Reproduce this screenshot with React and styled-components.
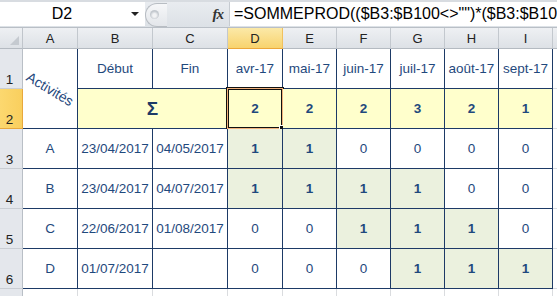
import React from "react";
import styled, { createGlobalStyle, css } from "styled-components";

const GlobalStyle = createGlobalStyle`
  html, body {
    margin: 0;
    padding: 0;
    background: #ffffff;
    overflow: hidden;
  }
  * { box-sizing: border-box; }
`;

const DARK = "#1d3a66";
const LIGHT = "#dadcdf";
const TEXT = "#1f497d";

const months = ["avr-17", "mai-17", "juin-17", "juil-17", "août-17", "sept-17"];
const totals = [2, 2, 2, 3, 2, 1];
const activities = [
  { name: "A", start: "23/04/2017", end: "04/05/2017", flags: [1, 1, 0, 0, 0, 0] },
  { name: "B", start: "23/04/2017", end: "04/07/2017", flags: [1, 1, 1, 1, 0, 0] },
  { name: "C", start: "22/06/2017", end: "01/08/2017", flags: [0, 0, 1, 1, 1, 0] },
  { name: "D", start: "01/07/2017", end: "", flags: [0, 0, 0, 1, 1, 1] },
];
const letters = ["A", "B", "C", "D", "E", "F", "G", "H", "I", ""];

const Page = styled.div`
  width: 557px;
  height: 296px;
  overflow: hidden;
  font-family: "Liberation Sans", Arial, sans-serif;
`;

/* ---- formula bar ---- */

const FormulaBar = styled.div`
  display: flex;
  height: 28px;
  border-top: 2px solid #d8dce1;
  border-bottom: 1px solid #b9bfc6;
  background: linear-gradient(#e9ecf0, #dce1e6);
`;

const NameBox = styled.div`
  display: flex;
  width: 145px;
  background: #ffffff;
  margin-bottom: 1px;
`;

const NameText = styled.div`
  width: 124px;
  display: flex;
  align-items: center;
  justify-content: center;
  font-size: 16px;
  color: #000;
`;

const DropArrow = styled.div`
  flex: 1;
  display: flex;
  align-items: center;
  justify-content: center;
  &::after {
    content: "";
    border-left: 4px solid transparent;
    border-right: 4px solid transparent;
    border-top: 4px solid #222;
  }
`;

const Middle = styled.div`
  width: 84px;
  display: flex;
  align-items: center;
  justify-content: space-between;
  padding-right: 6px;
`;

const Grip = styled.div`
  width: 22px;
  height: 24px;
  border: 1px solid #b8bdc3;
  border-right: none;
  border-radius: 12px 0 0 12px;
  background: linear-gradient(#f6f7f9, #e3e6ea);
  display: flex;
  align-items: center;
  padding-left: 4px;
  &::after {
    content: "";
    width: 9px;
    height: 9px;
    border-radius: 50%;
    background: radial-gradient(circle at 50% 60%, #f2f3f5 25%, #c3c8ce 60%);
  }
`;

const Fx = styled.div`
  font-family: "Liberation Serif", "Times New Roman", serif;
  font-style: italic;
  font-weight: bold;
  font-size: 15px;
  color: #333;
  letter-spacing: -1px;
`;

const FormulaInput = styled.div`
  flex: 1;
  background: #ffffff;
  border-left: 1px solid #c6cbd1;
  margin-bottom: 1px;
  padding-left: 4px;
  display: flex;
  align-items: center;
  font-size: 16px;
  color: #000;
  white-space: nowrap;
  overflow: hidden;
`;

/* ---- sheet grid ---- */

const Sheet = styled.div`
  display: grid;
  grid-template-columns: 23px 55px 75px 75px 55px 54px 54px 54px 54px 54px 20px;
  grid-template-rows: 21px repeat(6, 40px) 20px;
  font-size: 13.5px;
`;

const Corner = styled.div`
  background: linear-gradient(#eef0f3, #dde1e6);
  border-right: 1px solid #c0c5cb;
  border-bottom: 1px solid #b4bac1;
  position: relative;
  &::after {
    content: "";
    position: absolute;
    right: 3px;
    bottom: 3px;
    border-left: 9px solid transparent;
    border-bottom: 9px solid #c5cad0;
  }
`;

const ColHead = styled.div`
  display: flex;
  align-items: center;
  justify-content: center;
  color: #222;
  font-size: 13px;
  background: linear-gradient(#eef0f3, #dde1e6);
  border-right: 1px solid #c3c8ce;
  border-bottom: 1px solid #b4bac1;
  ${(p) =>
    p.$active &&
    css`
      background: linear-gradient(#fbe9a8, #f8d36e);
      border-right-color: #f1c15e;
      border-bottom-color: #eca73a;
    `}
`;

const RowHead = styled.div`
  display: flex;
  align-items: flex-end;
  justify-content: center;
  padding: 0 3px 1px 0;
  color: #222;
  font-size: 13.5px;
  background: #e4e7ec;
  border-right: 1px solid #b9bfc6;
  border-bottom: 1px solid #c9cdd3;
  ${(p) =>
    p.$active &&
    css`
      background: linear-gradient(90deg, #fcd86f, #f9cf5e);
      border-right-color: #e8a83c;
      border-bottom-color: #e8a83c;
    `}
`;

const Cell = styled.div`
  position: relative;
  display: flex;
  align-items: center;
  justify-content: center;
  color: ${TEXT};
  background: ${(p) => p.$fill || "#ffffff"};
  border-right: 1px solid ${(p) => (p.$lightRight ? LIGHT : DARK)};
  border-bottom: 1px solid ${(p) => (p.$lightBottom ? LIGHT : DARK)};
  font-weight: ${(p) => (p.$bold ? "bold" : "normal")};
  white-space: nowrap;
  ${(p) => p.$span && css`grid-column: span ${p.$span};`}
  ${(p) => p.$rows && css`grid-row: span ${p.$rows};`}
`;

const Rotated = styled.span`
  display: inline-block;
  transform: rotate(31deg);
  font-size: 14px;
`;

const Sigma = styled.span`
  font-size: 19px;
  font-weight: bold;
  color: #1d3a66;
`;

const Selection = styled.div`
  position: absolute;
  left: -2px;
  top: -2px;
  right: -2px;
  bottom: -2px;
  border: 1px solid #111;
  box-shadow: inset 0 0 0 1px #f2b27c, inset 0 0 0 2px #111;
  pointer-events: none;
  &::after {
    content: "";
    position: absolute;
    right: -4px;
    bottom: -4px;
    width: 6px;
    height: 6px;
    background: #111;
    border: 1px solid #fff;
  }
`;

const YELLOW = "#ffffcc";
const GREEN = "#ebf1de";

export default function App() {
  return (
    <Page>
      <GlobalStyle />
      <FormulaBar>
        <NameBox>
          <NameText>D2</NameText>
          <DropArrow />
        </NameBox>
        <Middle>
          <Grip />
          <Fx>fx</Fx>
        </Middle>
        <FormulaInput>=SOMMEPROD(($B3:$B100&lt;&gt;"")*($B3:$B10</FormulaInput>
      </FormulaBar>

      <Sheet>
        <Corner />
        {letters.map((l, i) => (
          <ColHead key={i} $active={l === "D"}>
            {l}
          </ColHead>
        ))}

        {/* row 1 */}
        <RowHead>1</RowHead>
        <Cell $rows={2}>
          <Rotated>Activités</Rotated>
        </Cell>
        <Cell>Début</Cell>
        <Cell>Fin</Cell>
        {months.map((m) => (
          <Cell key={m}>{m}</Cell>
        ))}
        <Cell $lightRight $lightBottom />

        {/* row 2 */}
        <RowHead $active>2</RowHead>
        <Cell $span={2} $fill={YELLOW}>
          <Sigma>Σ</Sigma>
        </Cell>
        {totals.map((t, i) => (
          <Cell key={i} $fill={YELLOW} $bold>
            {t}
            {i === 0 && <Selection />}
          </Cell>
        ))}
        <Cell $lightRight $lightBottom />

        {activities.map((a, r) => (
          <React.Fragment key={a.name}>
            <RowHead>{r + 3}</RowHead>
            <Cell>{a.name}</Cell>
            <Cell>{a.start}</Cell>
            <Cell>{a.end}</Cell>
            {a.flags.map((f, i) => (
              <Cell key={i} $fill={f ? GREEN : undefined} $bold={!!f}>
                {f}
              </Cell>
            ))}
            <Cell $lightRight $lightBottom />
          </React.Fragment>
        ))}

        {/* row 7, only its top edge is in view */}
        <RowHead />
        {letters.map((l, i) => (
          <Cell key={i} $lightRight $lightBottom />
        ))}
      </Sheet>
    </Page>
  );
}
